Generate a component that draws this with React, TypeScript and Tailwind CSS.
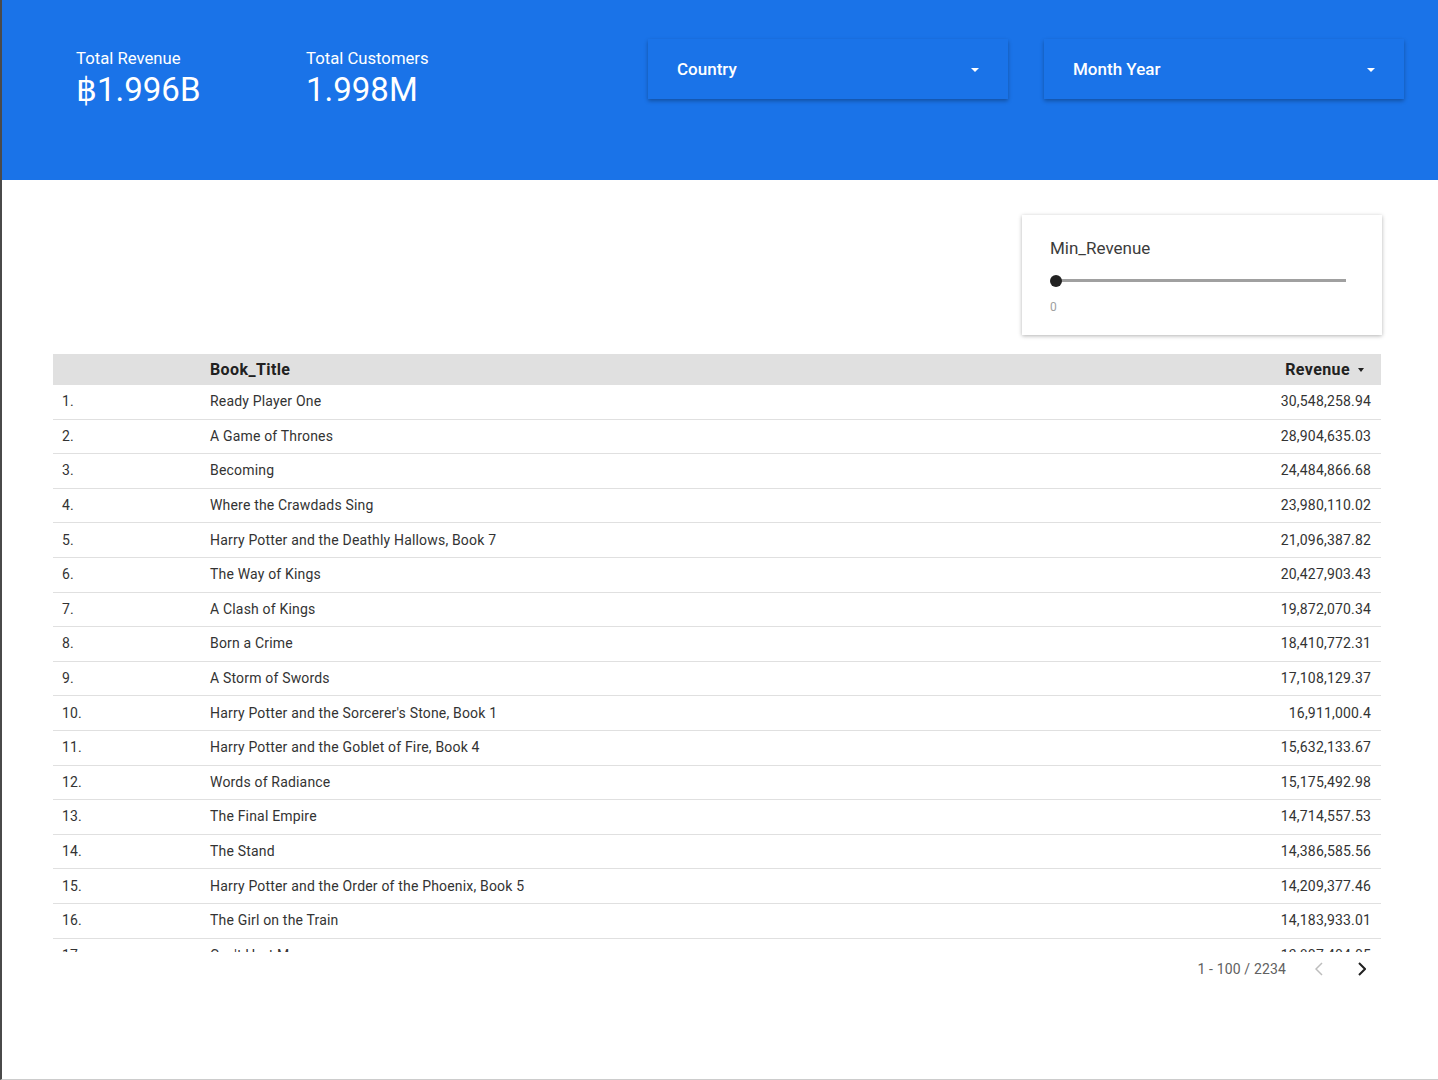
const rows: [string, string][] = [
  ['Ready Player One', '30,548,258.94'],
  ['A Game of Thrones', '28,904,635.03'],
  ['Becoming', '24,484,866.68'],
  ['Where the Crawdads Sing', '23,980,110.02'],
  ['Harry Potter and the Deathly Hallows, Book 7', '21,096,387.82'],
  ['The Way of Kings', '20,427,903.43'],
  ['A Clash of Kings', '19,872,070.34'],
  ['Born a Crime', '18,410,772.31'],
  ['A Storm of Swords', '17,108,129.37'],
  ["Harry Potter and the Sorcerer's Stone, Book 1", '16,911,000.4'],
  ['Harry Potter and the Goblet of Fire, Book 4', '15,632,133.67'],
  ['Words of Radiance', '15,175,492.98'],
  ['The Final Empire', '14,714,557.53'],
  ['The Stand', '14,386,585.56'],
  ['Harry Potter and the Order of the Phoenix, Book 5', '14,209,377.46'],
  ['The Girl on the Train', '14,183,933.01'],
  ["Can't Hurt Me", '13,807,404.05'],
];

function Kpi({ label, value, width }: { label: string; value: string; width: string }) {
  return (
    <div className={`${width} pt-[48px]`}>
      <div className="text-[16.7px] leading-[21px] text-white">{label}</div>
      <div className="mt-[2px] text-[33px] leading-[37px] text-white">{value}</div>
    </div>
  );
}

function Dropdown({ label }: { label: string }) {
  return (
    <div className="mt-[39px] flex h-[60px] w-[360px] items-center justify-between bg-[#1a73e8] pl-[29px] pr-[29px] pt-[1px] shadow-[0_2px_4px_rgba(0,0,0,0.3)]">
      <span className="text-[17px] font-medium text-white">{label}</span>
      <span className="h-0 w-0 border-x-[4px] border-t-[4px] border-x-transparent border-t-white" />
    </div>
  );
}

export default function App() {
  return (
    <div
      className="flex h-[1080px] w-[1438px] flex-col border-b border-l-2 border-b-[#cccccc] border-l-[#4a4a4a] bg-white"
      style={{ fontFamily: 'Roboto, "Liberation Sans", sans-serif' }}
    >
      {/* Header */}
      <div className="flex h-[180px] shrink-0 bg-[#1a73e8] pl-[74px]">
        <Kpi label="Total Revenue" value="฿1.996B" width="w-[230px]" />
        <Kpi label="Total Customers" value="1.998M" width="w-[342px]" />
        <Dropdown label="Country" />
        <div className="w-[36px]" />
        <Dropdown label="Month Year" />
      </div>

      {/* Body */}
      <div className="flex flex-col pl-[51px] pr-[57px] pt-[35px]">
        {/* Slider control */}
        <div className="mr-[-1px] flex justify-end">
          <div className="h-[120px] w-[360px] bg-white pl-[28px] pr-[36px] pt-[23px] shadow-[0_1px_4px_rgba(0,0,0,0.3)]">
            <div className="text-[17px] leading-[21px] text-[#3c3c3c]">Min_Revenue</div>
            <div className="relative mt-[16px] h-[12px]">
              <div className="absolute left-[6px] right-0 top-[4px] h-[3px] bg-[#a0a0a0]" />
              <div className="absolute left-0 top-0 h-[12px] w-[12px] rounded-full bg-[#222222]" />
            </div>
            <div className="mt-[13px] text-[12px] leading-[14px] text-[#a0a0a0]">0</div>
          </div>
        </div>

        {/* Table */}
        <div className="mt-[19px] w-[1328px]">
          <div className="flex h-[31px] items-center bg-[#e0e0e0] pt-[1px] text-[16px] font-bold tracking-[0.4px] text-[#212121]">
            <div className="w-[147px]" />
            <div className="flex-1 pl-[10px]">Book_Title</div>
            <div className="flex items-center pr-[17px]">
              Revenue
              <span className="ml-[8px] h-0 w-0 border-x-[3.5px] border-t-[4px] border-x-transparent border-t-[#212121]" />
            </div>
          </div>
          <div className="h-[567px] overflow-hidden">
            {rows.map(([title, revenue], i) => (
              <div
                key={title}
                className="flex h-[34.6px] items-center border-b border-[#e0e0e0] text-[14px] tracking-[0.18px] text-[#333333]"
              >
                <div className="w-[147px] pl-[9px]">{i + 1}.</div>
                <div className="flex-1 pl-[10px]">{title}</div>
                <div className="pr-[10px]">{revenue}</div>
              </div>
            ))}
          </div>
          {/* Pagination */}
          <div className="flex h-[34px] items-center justify-end pr-[15px] text-[14px] tracking-[0.15px] text-[#616161]">
            <span>1 - 100 / 2234</span>
            <svg className="ml-[29px]" width="8" height="14" viewBox="0 0 8 14" fill="none">
              <polyline points="7,1 1,7 7,13" stroke="#bdbdbd" strokeWidth="1.5" />
            </svg>
            <svg className="ml-[35px]" width="8" height="14" viewBox="0 0 8 14" fill="none">
              <polyline points="1,1 7,7 1,13" stroke="#212121" strokeWidth="2" />
            </svg>
          </div>
        </div>
      </div>
    </div>
  );
}
